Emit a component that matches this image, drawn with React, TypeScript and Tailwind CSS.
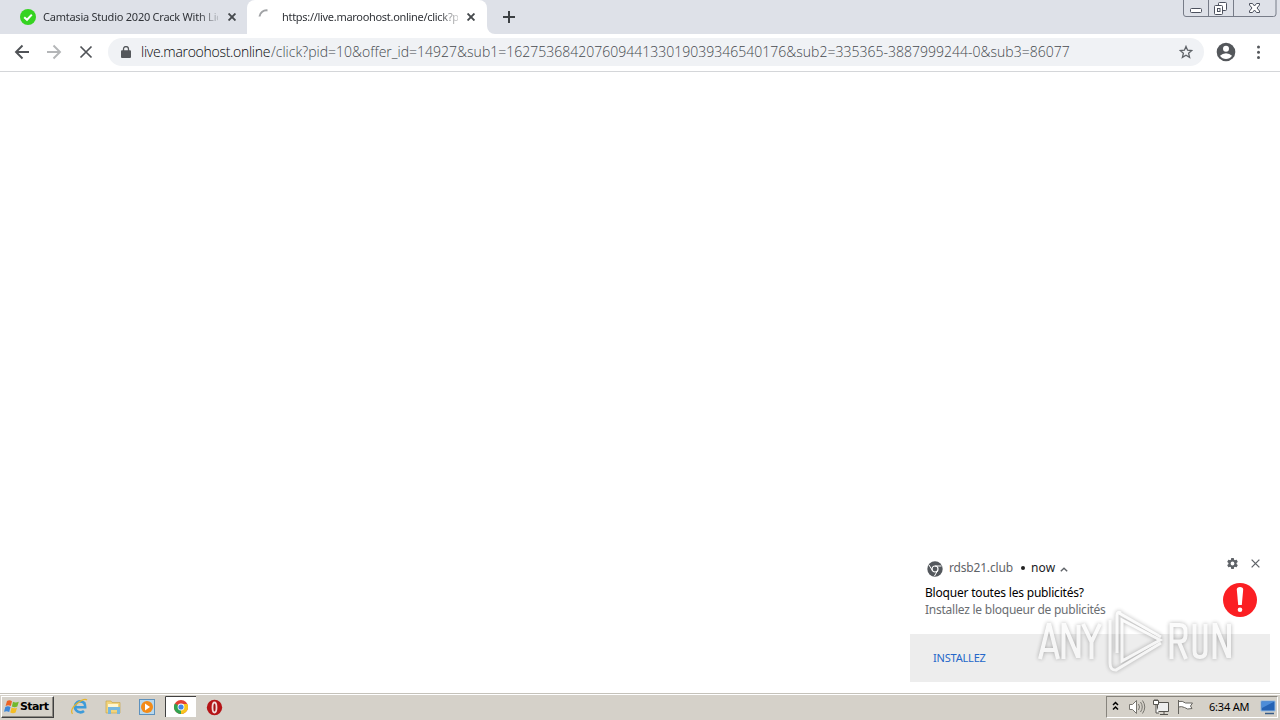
import React from 'react';

const X = ({ size, w = 1.6, c = '#5f6368' }: { size: number; w?: number; c?: string }) => (
  <svg width={size} height={size} viewBox="0 0 10 10" className="shrink-0" fill="none" stroke={c} strokeWidth={(w * 10) / size}>
    <path d="M.7.7 9.3 9.3M9.3.7.7 9.3" />
  </svg>
);

function Tabs() {
  return (
    <div className="flex h-[34px] bg-[#dee1e8] text-[11px] text-[#303338]">
      <div className="flex h-[34px] w-[247px] items-center pl-5">
        <svg width="16" height="16" viewBox="0 0 16 16" className="shrink-0">
          <circle cx="8" cy="8" r="8" fill="#35d321" />
          <path d="M4.2 8.2 7 10.8 11.8 5.6" fill="none" stroke="#fff" strokeWidth="2" />
        </svg>
        <span className="ml-[7px] w-[175px] overflow-hidden whitespace-nowrap tracking-[-0.24px] [mask-image:linear-gradient(to_right,#000_155px,transparent_180px)]">
          Camtasia Studio 2020 Crack With Lic
        </span>
        <span className="ml-[10px]"><X size={8} w={1.9} c="#45494d" /></span>
      </div>
      <div className="flex h-[34px] w-[240px] items-center rounded-t-[8px] bg-white pl-[11px]">
        <svg width="16" height="16" viewBox="0 0 16 16" className="shrink-0" fill="none" stroke="#a0a2a5" strokeWidth="2">
          <path d="M1.5 7.5A7 7 0 0 1 9.5 1.4" />
        </svg>
        <span className="ml-[8px] w-[176px] overflow-hidden whitespace-nowrap tracking-[-0.3px] [mask-image:linear-gradient(to_right,#000_156px,transparent_182px)]">
          https://live.maroohost.online/click?p
        </span>
        <span className="ml-[9px]"><X size={8} w={1.9} c="#45494d" /></span>
      </div>
      <div className="h-[34px] w-2 bg-white">
        <div className="h-[34px] w-2 rounded-bl-[8px] bg-[#dee1e8]" />
      </div>
      <svg width="12" height="12" viewBox="0 0 12 12" className="mt-[11px] ml-[8px]" stroke="#3c4043" strokeWidth="2"><path d="M6 0v12M0 6h12" /></svg>
      <svg width="94" height="18" viewBox="0 0 94 18" className="mr-[3px] ml-auto" fill="none" stroke="#777c88">
        <path d="M.5 0v14q0 2.500 2.500 2.500h87.500q2.500 0 2.500-2.500V0M25.500 0v16.500M50.500 0v16.500" />
        <g stroke="#4c515e">
          <rect x="7.500" y="8.500" width="11" height="4" rx="1" fill="#fff" />
          <rect x="35.500" y="2.500" width="8" height="8" rx="1" fill="#fff" />
          <rect x="31.500" y="5.500" width="8" height="9" rx="1" fill="#fff" />
          <rect x="34.500" y="8.500" width="2.500" height="3" />
          <path d="M66.500 3.500h3l2 2.500 2-2.500h3v1.500L74 8l2.500 3v1.500h-3l-2-2.500-2 2.500h-3V11L69 8l-2.500-3z" fill="#fff" />
        </g>
      </svg>
    </div>
  );
}

function Toolbar() {
  return (
    <div className="flex h-[38px] items-center border-b border-[#d4d6d9] bg-white pb-px">
      <svg width="108" height="36" viewBox="0 0 108 36" className="shrink-0" fill="none" strokeWidth="1.900">
        <path d="M29 18H16M22.500 11.500 16 18l6.500 6.500" stroke="#505357" />
        <path d="M47 18h13M53.500 11.500 60 18l-6.500 6.500" stroke="#b4b6b8" />
        <path d="M80.500 12.500l11 11M91.500 12.500l-11 11" stroke="#505357" strokeWidth="1.700" />
      </svg>
      <div className="flex h-7 w-[1096px] items-center rounded-full bg-[#f0f2f5]">
        <svg width="10" height="12" viewBox="0 0 10 12" className="ml-[13px] shrink-0">
          <rect y="4.200" width="10" height="7.800" rx="1" fill="#54575b" />
          <path d="M2.500 5V3a2.500 2.500 0 0 1 5 0v2" fill="none" stroke="#54575b" strokeWidth="1.300" />
        </svg>
        <div className="ml-[10px] flex pb-[2px] font-['Open_Sans','Noto_Sans',sans-serif] text-[14px] font-light whitespace-nowrap text-[#45494e]">
          <span className="w-[130px] text-[#050608] tracking-[-0.29px]">live.maroohost.online</span>
          <span className="tracking-[0.01px]">/click?pid=10&amp;offer_id=14927&amp;sub1=16275368420760944133019039346540176&amp;sub2=335365-3887999244-0&amp;sub3=86077</span>
        </div>
        <svg width="14" height="14" viewBox="0 0 14 14" className="mr-[11px] ml-auto" fill="none" stroke="#5f6368" strokeWidth="1.300">
          <path d="M7 1.400 8.600 5.200 12.800 5.500 9.600 8.300 10.600 12.400 7 10.200 3.400 12.400 4.400 8.300 1.200 5.500 5.400 5.200z" />
        </svg>
      </div>
      <svg width="76" height="36" viewBox="0 0 76 36" fill="#54575b">
        <circle cx="22" cy="18" r="9.300" />
        <circle cx="22" cy="14.700" r="3" fill="#fff" />
        <path d="M16 21.800q2.500-2.500 6-2.500t6 2.500q-2.300 3.300-6 3.300t-6-3.300z" fill="#fff" />
        <circle cx="54.500" cy="13" r="1.500" /><circle cx="54.500" cy="18.200" r="1.500" /><circle cx="54.500" cy="23.400" r="1.500" />
      </svg>
    </div>
  );
}

function Notification() {
  return (
    <div className="mr-[10px] mb-[11px] flex h-[132px] w-[360px] flex-col bg-white">
      <div className="flex h-[84px] justify-between pr-[9px] pl-[15px]">
        <div>
          <div className="mt-[9px] flex h-[18px] items-center text-[12px] text-[#5f6368]">
            <svg width="16" height="16" viewBox="0 0 16 16" className="mt-[1px] ml-[2px]">
              <circle cx="8" cy="8" r="7.700" fill="#54585d" />
              <circle cx="8" cy="8" r="3" fill="#54585d" stroke="#fff" strokeWidth="1.200" />
              <path d="M8 5h6.500M5.400 9.500 2 4M10.600 9.500 7.500 15" stroke="#fff" strokeWidth="1" />
            </svg>
            <span className="ml-[6px] w-[72px] tracking-[-0.18px] whitespace-nowrap">rdsb21.club</span>
            <span className="h-1 w-1 rounded-full bg-[#222]" />
            <span className="ml-[6px] w-[27px] text-[#202124] tracking-[0.1px]">now</span>
            <svg width="8" height="5" viewBox="0 0 8 5" className="mt-[3px] ml-[2px]" fill="none" stroke="#5f6368" strokeWidth="1.400"><path d="M.8 4.300 4 1.200 7.200 4.300" /></svg>
          </div>
          <div className="mt-[7px] h-[17px] text-[12px] leading-[17px] whitespace-nowrap text-black tracking-[-0.2px]">Bloquer toutes les publicités?</div>
          <div className="h-[17px] text-[12px] leading-[17px] whitespace-nowrap text-[#6a6d71] tracking-[-0.24px]">Installez le bloqueur de publicités</div>
        </div>
        <div className="flex w-[42px] flex-col items-end">
          <div className="mt-[7px] flex h-[13px] w-[42px] items-center justify-between pr-[1px] pl-[7px]">
            <svg width="13" height="13" viewBox="0 0 24 24" fill="#5f6368"><path d="M19.430 12.980c.04-.32.07-.64.07-.98s-.03-.66-.07-.98l2.110-1.650c.19-.15.24-.42.12-.64l-2-3.460c-.12-.22-.39-.3-.61-.22l-2.490 1c-.52-.4-1.080-.73-1.690-.98l-.38-2.650A.49.49 0 0 0 14 2h-4c-.25 0-.46.18-.49.42l-.38 2.650c-.61.25-1.170.59-1.690.98l-2.490-1c-.23-.09-.49 0-.61.22l-2 3.460c-.13.22-.07.49.12.64l2.110 1.650c-.04.32-.07.65-.07.98s.03.66.07.98l-2.110 1.650c-.19.15-.24.42-.12.64l2 3.460c.12.22.39.3.61.22l2.490-1c.52.4 1.080.73 1.690.98l.38 2.650c.03.24.24.42.49.42h4c.25 0 .46-.18.49-.42l.38-2.650c.61-.25 1.170-.59 1.690-.98l2.490 1c.23.09.49 0 .61-.22l2-3.460c.12-.22.07-.49-.12-.64l-2.110-1.650zM12 15.500a3.500 3.500 0 1 1 0-7 3.500 3.500 0 0 1 0 7z" /></svg>
            <X size={9} w={1.3} />
          </div>
          <svg width="34" height="34" viewBox="0 0 34 34" className="mt-[13px] mr-[4px]"><circle cx="17" cy="17" r="17" fill="#fb1f23" /><path d="M13.800 6.500q0-2.500 3.200-2.500t3.200 2.500L18.800 22h-3.600z" fill="#fff" /><circle cx="17" cy="26.800" r="2.300" fill="#fff" /></svg>
        </div>
      </div>
      <div className="flex h-12 items-center bg-[#ededed] pl-[23px] text-[11px] text-[#2467c9] tracking-[-0.2px]">INSTALLEZ</div>
    </div>
  );
}

function Watermark() {
  return (
    <div className="absolute top-[606px] left-[1034px] flex h-[70px] w-[204px] items-center opacity-75 drop-shadow-[0_0_2px_rgba(0,0,0,0.4)]">
      <svg width="204" height="70" viewBox="0 0 204 70" fill="none" stroke="#fafafa">
        <g strokeWidth="4">
          <path d="M6 53 14.500 19h1L24 53M9 44h12M29.500 53V19h1L43.500 50h1V19M49 18l8.500 18v17M57.500 36 66 18" />
          <path d="M137.500 53V19h8q6 0 6 6v4.500q0 6-6 6h-8M145 36l7 17M160.500 18v27q0 6 5.500 6t5.500-6V18M180.500 53V19h1L194 50h1V18" />
        </g>
        <path d="M83 9v38M76 14v43M85 7 127 31M88 26v29L126 34 88 14zM82 64 127 37M83 9q0-4 4-2M76 57q0 8 7 7" strokeWidth="3" />
      </svg>
    </div>
  );
}

function Taskbar() {
  return (
    <div className="flex h-[27px] border-t border-[#c5c2ba] bg-[#d5d1c9] text-[11px] text-black">
      <div className="flex w-full border-t border-white">
        <div className="mt-[1px] ml-[1px] flex h-[22px] w-[53px] items-center border border-t-white border-r-[#404040] border-b-[#404040] border-l-white pl-[2px] shadow-[inset_-1px_-1px_#8c8982]">
          <svg width="16" height="16" viewBox="0 0 16 16" className="shrink-0">
            <path d="M3 2q2.500-1.500 5 .2L6.800 7Q4.300 5.600 1.600 6.900z" fill="#ec6325" />
            <path d="M9 2.700q2.500 1.400 5.800 0L13.300 7.500q-2.700 1.300-5.400-.1z" fill="#72b82d" />
            <path d="M1.300 8q2.700-1.300 5.200.1L5.200 13Q2.700 11.500 0 12.800z" fill="#3d87d9" />
            <path d="M7.600 8.600q2.600 1.400 5.400.1L11.600 13.600q-2.700 1.200-5.300-.1z" fill="#f4bd25" />
          </svg>
          <span className="font-['DejaVu_Sans','Noto_Sans',sans-serif] text-[11px] font-bold tracking-[-0.6px]">Start</span>
        </div>
        <svg width="154" height="24" viewBox="0 0 154 24" className="ml-[16px] shrink-0">
          <g fill="none">
            <path d="M15 8.800A5.500 5.500 0 1 0 14 16M4 12.200h11.200q.3-5.700-5.700-5.700" stroke="#3d9bd9" strokeWidth="2.600" />
            <path d="M2.500 18.800Q-.5 14.500 7 8.500T17 5" stroke="#e6b52d" strokeWidth="1.300" />
          </g>
          <path d="M36 6h5l1 1.500h8V18H36z" fill="#f1d47c" stroke="#c9a64b" strokeWidth=".7" />
          <path d="M38 9h10v3H38z" fill="#fff6cf" /><path d="M38 12h12v7h-3v-4h-6v4h-3z" fill="#75b7df" />
          <rect x="69.500" y="4.500" width="15" height="15" fill="#b8d8ed" stroke="#5d91bd" />
          <circle cx="77" cy="12" r="6" fill="#f38b18" /><path d="M75 8.500v7l5-3.500z" fill="#fff" />
          <path d="M95 22V1h31v21z" fill="#fff" /><path d="M95.500 22V1.500H126" fill="none" stroke="#404040" />
          <circle cx="111" cy="12" r="7" fill="#e24134" />
          <path d="M111 12 104.900 8.500A7 7 0 0 0 111 19l3.500-5z" fill="#31a350" />
          <path d="M111 12v7a7 7 0 0 0 6.300-10H111z" fill="#f8c51c" />
          <circle cx="111" cy="12" r="3.400" fill="#fff" /><circle cx="111" cy="12" r="2.600" fill="#4285e8" />
          <circle cx="144.500" cy="12.500" r="7.700" fill="#b51417" /><ellipse cx="144.500" cy="12.500" rx="2" ry="5" fill="#a31416" stroke="#f3dada" strokeWidth="1.800" />
        </svg>
        <div className="mt-[1px] mr-[2px] ml-auto flex h-[22px] w-[172px] items-center border border-t-[#87847d] border-r-white border-b-white border-l-[#87847d]">
          <svg width="88" height="20" viewBox="0 0 88 20" className="shrink-0" fill="none">
            <path d="M6 8 8.500 5.500 11 8M6 12.500 8.500 10 11 12.500" stroke="#000" strokeWidth="1.500" />
            <g stroke="#77756f">
              <path d="M22.500 7.500h3l4-4v13l-4-4h-3z" fill="#fff" />
              <path d="M31.500 7q2 3 0 6M33.500 5q3.500 5 0 10M35.500 3.500q4.500 6.500 0 13" />
              <path d="M50.500 5.500h11v9h-11zM53 17.500h8M57 15v2" fill="#eee" stroke="#55534e" />
              <path d="M46.500 3.500h5v4h-5zM48 2v2M50 2v2M49 8v8h3" fill="#fff" stroke="#55534e" />
              <path d="M71.500 17V3M71.500 4.500q4-1 7 1.500h7l-2 3 1.500 2.500q-5 1.500-7.500-1-3-1.500-6-.5" fill="#fff" stroke="#66645f" />
            </g>
          </svg>
          <span className="ml-[14px] w-[43px] whitespace-nowrap tracking-[-0.2px]">6:34 AM</span>
          <svg width="16" height="16" viewBox="0 0 16 16" className="ml-[8px] shrink-0"><path d="M1 2h14v10H1z" fill="#2463b5" stroke="#93bbe2" /><path d="M1.500 2.500h13L2 9z" fill="#4c8dd9" /><path d="M5 14.500h9" stroke="#365b86" strokeWidth="1.500" /></svg>
        </div>
      </div>
    </div>
  );
}

export default function App() {
  return (
    <div className="relative flex h-[720px] w-[1280px] flex-col overflow-hidden bg-white font-['Noto_Sans','Open_Sans',sans-serif]">
      <Tabs />
      <Toolbar />
      <main className="flex flex-1 items-end justify-end"><Notification /></main>
      <Taskbar />
      <Watermark />
    </div>
  );
}
